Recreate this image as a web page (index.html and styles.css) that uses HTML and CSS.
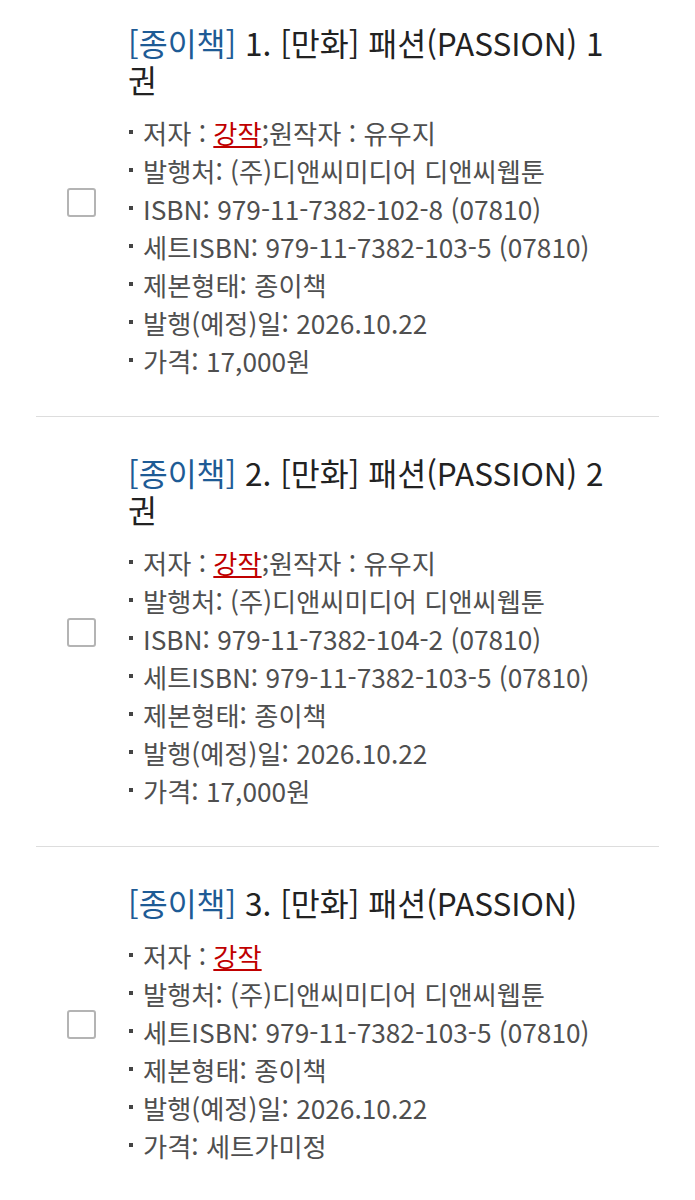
FILE: index.html
```html
<!DOCTYPE html>
<html lang="ko">
<head>
<meta charset="utf-8">
<link rel="stylesheet" href="styles.css">
</head>
<body>
<div class="list">
  <div class="item">
    <div class="check"><span class="box"></span></div>
    <div class="content">
      <div class="title"><span class="kind">[종이책]</span> <span class="name">1. [만화] 패션(PASSION) 1권</span></div>
      <ul class="info">
        <li>저자 : <a class="author">강작</a>;원작자 : 유우지</li>
        <li>발행처: (주)디앤씨미디어 디앤씨웹툰</li>
        <li>ISBN: 979-11-7382-102-8 (07810)</li>
        <li>세트ISBN: 979-11-7382-103-5 (07810)</li>
        <li>제본형태: 종이책</li>
        <li>발행(예정)일: 2026.10.22</li>
        <li>가격: 17,000원</li>
      </ul>
    </div>
  </div>
  <div class="item">
    <div class="check"><span class="box"></span></div>
    <div class="content">
      <div class="title"><span class="kind">[종이책]</span> <span class="name">2. [만화] 패션(PASSION) 2권</span></div>
      <ul class="info">
        <li>저자 : <a class="author">강작</a>;원작자 : 유우지</li>
        <li>발행처: (주)디앤씨미디어 디앤씨웹툰</li>
        <li>ISBN: 979-11-7382-104-2 (07810)</li>
        <li>세트ISBN: 979-11-7382-103-5 (07810)</li>
        <li>제본형태: 종이책</li>
        <li>발행(예정)일: 2026.10.22</li>
        <li>가격: 17,000원</li>
      </ul>
    </div>
  </div>
  <div class="item">
    <div class="check"><span class="box"></span></div>
    <div class="content">
      <div class="title"><span class="kind">[종이책]</span> <span class="name">3. [만화] 패션(PASSION)</span></div>
      <ul class="info">
        <li>저자 : <a class="author">강작</a></li>
        <li>발행처: (주)디앤씨미디어 디앤씨웹툰</li>
        <li>세트ISBN: 979-11-7382-103-5 (07810)</li>
        <li>제본형태: 종이책</li>
        <li>발행(예정)일: 2026.10.22</li>
        <li>가격: 세트가미정</li>
      </ul>
    </div>
  </div>
</div>
</body>
</html>
```
FILE: styles.css
```css
* { box-sizing: border-box; }
html, body { margin: 0; padding: 0; background: #fff; }
body {
  font-family: "Noto Sans CJK KR", "Noto Sans", sans-serif;
  color: #222;
}
.list { padding: 0 36px; }
.item {
  display: flex;
  align-items: center;
  border-bottom: 1px solid #ddd;
  padding: 37px 0 36px;
}
.item:first-child { padding-top: 24px; }
.item:last-child { border-bottom: none; }
.check {
  width: 92px;
  flex: none;
  display: flex;
  padding-left: 31px;
}
.box {
  width: 29px;
  height: 29px;
  border: 2px solid #b4b4b4;
  border-radius: 3px;
  background: #fff;
}
.content { flex: 1; padding-right: 36px; }
.title {
  font-size: 31.5px;
  line-height: 37px;
  color: #222;
}
.kind { color: #1e5b95; }
.name { color: #222; }
.info {
  list-style: none;
  margin: 16px 0 0;
  padding: 0;
}
.info li {
  position: relative;
  padding-left: 15px;
  font-size: 26.25px;
  line-height: 38px;
  color: #4f4f4f;
}
.info li::before {
  content: "";
  position: absolute;
  left: 1px;
  top: 16px;
  width: 4px;
  height: 4px;
  background: #444;
}
.author {
  color: #c00000;
  text-decoration: underline;
}
```
